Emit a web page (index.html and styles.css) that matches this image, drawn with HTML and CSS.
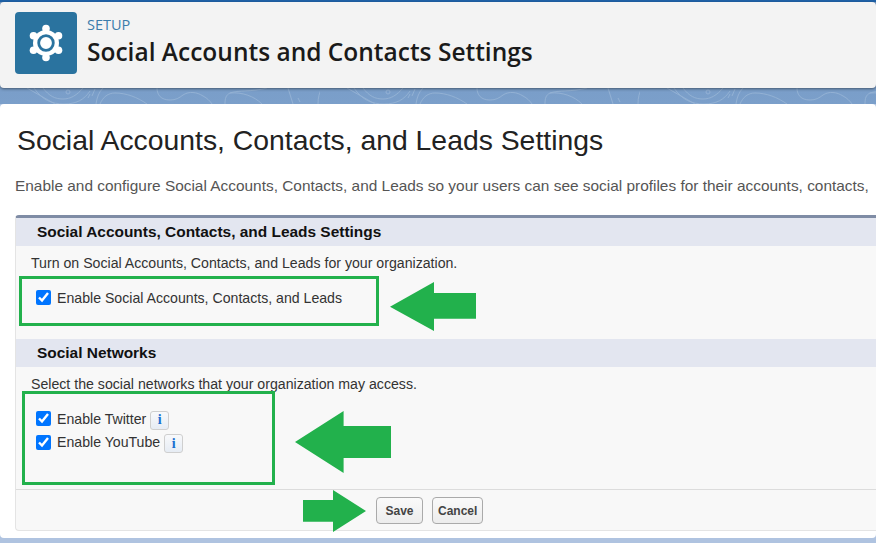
FILE: index.html
```html
<!DOCTYPE html>
<html lang="en">
<head>
<meta charset="utf-8">
<title>Social Accounts and Contacts Settings</title>
<link rel="stylesheet" href="styles.css">
</head>
<body>
<div class="stage">
  <svg class="pattern" width="876" height="104" viewBox="0 0 876 104" fill="none">
    <defs>
      <pattern id="swirl" x="0" y="0" width="320" height="104" patternUnits="userSpaceOnUse">
        <g fill="none" stroke="#a6c0dc" stroke-width="1" opacity=".55">
          <path d="M27 88 55 104"/>
          <path d="M43 88c6 8 12 11 20 11s14-4 20-11"/>
          <path d="M34 88c8 12 18 16 30 16s20-4 26-13"/>
          <circle cx="68" cy="92" r="2"/>
          <path d="M88 98l2-4M92 96l3-7"/>
          <path d="M96 104c1-7 3-12 7-16"/>
          <path d="M100 104c3-7 8-11 15-11 11 0 22 4 32 11"/>
          <path d="M157 88c0 7 4 12 13 12 6 0 9-2 13-5 6-4 14-3 20 1 4 2 7 5 9 8"/>
          <path d="M225 104c0-6 1-9 5-11 8-3 22-1 37-5"/>
          <path d="M230 93c12-1 24 3 32 11"/>
          <path d="M288 88l5 16"/>
          <path d="M298 98l2 4"/>
          <path d="M318 104c0-6 1-11 4-16"/>
        </g>
      </pattern>
    </defs>
    <rect x="0" y="88" width="876" height="16" fill="url(#swirl)"/>
  </svg>
  <header class="page-header">
    <div class="tile">
      <svg width="36" height="38" viewBox="0 0 36 38">
        <g fill="#fff">
          <circle cx="18" cy="19" r="13"/>
          <circle cx="18" cy="4.500" r="3.800"/>
          <circle cx="18" cy="33.500" r="3.800"/>
          <circle cx="5.500" cy="11.700" r="3.800"/>
          <circle cx="30.500" cy="11.700" r="3.800"/>
          <circle cx="5.500" cy="26.300" r="3.800"/>
          <circle cx="30.500" cy="26.300" r="3.800"/>
        </g>
        <circle cx="18" cy="19" r="7.300" fill="#fff" stroke="#2a739f" stroke-width="2.800"/>
      </svg>
    </div>
    <div class="heading">
      <div class="eyebrow">SETUP</div>
      <h1 class="page-title">Social Accounts and Contacts Settings</h1>
    </div>
  </header>

  <main class="panel">
    <h2 class="panel-title">Social Accounts, Contacts, and Leads Settings</h2>
    <p class="description">Enable and configure Social Accounts, Contacts, and Leads so your users can see social profiles for their accounts, contacts,</p>

    <section class="block">
      <h3 class="block-head">Social Accounts, Contacts, and Leads Settings</h3>
      <div class="block-body first">
        <p class="hint">Turn on Social Accounts, Contacts, and Leads for your organization.</p>
        <label class="option option-main"><input type="checkbox" checked><span>Enable Social Accounts, Contacts, and Leads</span></label>
      </div>
      <h3 class="block-head second">Social Networks</h3>
      <div class="block-body networks">
        <p class="hint">Select the social networks that your organization may access.</p>
        <div class="options">
          <label class="option"><input type="checkbox" checked><span>Enable Twitter</span><i class="info">i</i></label>
          <label class="option"><input type="checkbox" checked><span>Enable YouTube</span><i class="info">i</i></label>
        </div>
      </div>
      <div class="block-foot">
        <button class="btn" type="button">Save</button>
        <button class="btn" type="button">Cancel</button>
      </div>
    </section>
  </main>

  <div class="mark mark-one"></div>
  <div class="mark mark-two"></div>
  <svg class="arrow arrow-one" width="86" height="49" viewBox="0 0 86 49"><path fill="#22b14c" d="M0 24.700 44 0v11h42v25.700H44V49z"/></svg>
  <svg class="arrow arrow-two" width="96" height="62" viewBox="0 0 96 62"><path fill="#22b14c" d="M0 31 48.600 0v15H96v32H48.600v15z"/></svg>
  <svg class="arrow arrow-three" width="63" height="42" viewBox="0 0 63 42"><path fill="#22b14c" d="M63 21 30 0v10H0v21.700h30V42z"/></svg>
</div>
</body>
</html>
```

FILE: styles.css
```css
* { box-sizing: border-box; }
html, body { margin: 0; padding: 0; }
body { width: 876px; height: 543px; overflow: hidden; font-family: "Liberation Sans", Arial, sans-serif; }

.stage {
  position: relative;
  width: 876px;
  height: 543px;
  overflow: hidden;
  padding-top: 2px;
  background: linear-gradient(#1f62a8 0, #1f62a8 2px, #7398c4 2px, #7b9fca 104px, #afc3e0 104px);
}
.pattern { position: absolute; left: 0; top: 0; }

.page-header {
  position: relative;
  display: flex;
  align-items: flex-start;
  gap: 10px;
  height: 86px;
  padding: 10px 0 0 15px;
  background: #f3f3f3;
  border-radius: 4px;
  box-shadow: 0 1px 3px rgba(0, 0, 0, .45);
}
.tile {
  display: flex;
  align-items: center;
  justify-content: center;
  width: 62px;
  height: 62px;
  background: #2a739f;
  border-radius: 4px;
}
.heading { padding-top: 4px; }
.eyebrow { font: 14.500px/18px "Open Sans", sans-serif; color: #3a7cab; }
.page-title { margin: 2px 0 0; font: 600 24.500px/32px "Open Sans", sans-serif; color: #1a1a1a; }

.panel {
  position: relative;
  height: 434px;
  margin-top: 16px;
  padding: 20px 0 0 15px;
  background: #fff;
  border-radius: 4px;
}
.panel-title { margin: 0 0 0 2px; font-size: 28.350px; line-height: 32px; font-weight: 400; color: #222; }
.description { margin: 22px 0 0; font-size: 15.420px; line-height: 16px; color: #555; white-space: nowrap; }

.block {
  width: 880px;
  height: 316px;
  margin-top: 21px;
  background: #f8f8f8;
  border-top: 3px solid #7f8ca5;
  border-left: 1px solid #e4e4e4;
  border-bottom: 1px solid #e4e4e4;
  border-radius: 4px;
}
.block-head {
  margin: 0;
  height: 28px;
  padding-left: 21px;
  font-size: 15.450px;
  line-height: 27px;
  font-weight: 700;
  color: #111;
  background: #e3e6f0;
}
.block-body { padding: 9px 0 0 15px; }
.first { height: 93px; }
.networks { height: 123px; border-bottom: 1px solid #dcdcdc; }
.hint { margin: 0; font-size: 14.150px; line-height: 16px; color: #333; }

.option { display: flex; align-items: center; gap: 6px; height: 23.500px; font-size: 14.130px; color: #333; }
.option input { width: 15px; height: 15px; margin: 0 0 0 5px; accent-color: #0075ff; }
.option-main { margin-top: 15px; }
.options { margin-top: 15px; }
.info {
  display: inline-flex;
  align-items: center;
  justify-content: center;
  width: 19px;
  height: 19px;
  margin: 3px 0 0 -2px;
  font: 700 14px/1 "Liberation Serif", serif;
  color: #1a6fd0;
  background: linear-gradient(#f8f9fb, #e6ecf4);
  border: 1px solid #cfcfcf;
  border-radius: 3px;
}

.block-foot { display: flex; gap: 9px; padding: 7px 0 0 360px; }
.btn {
  height: 27px;
  padding: 0 5px;
  min-width: 47px;
  font: 700 12px "Liberation Sans", sans-serif;
  color: #444;
  background: linear-gradient(#fafafa, #ececec);
  border: 1px solid #aaa;
  border-radius: 4px;
}

.mark { position: absolute; border: 3px solid #22b14c; }
.mark-one { left: 19px; top: 276px; width: 360px; height: 50px; }
.mark-two { left: 22px; top: 391px; width: 253px; height: 94px; }
.arrow { position: absolute; }
.arrow-one { left: 390px; top: 282px; }
.arrow-two { left: 295px; top: 411px; }
.arrow-three { left: 303px; top: 490px; }
```
